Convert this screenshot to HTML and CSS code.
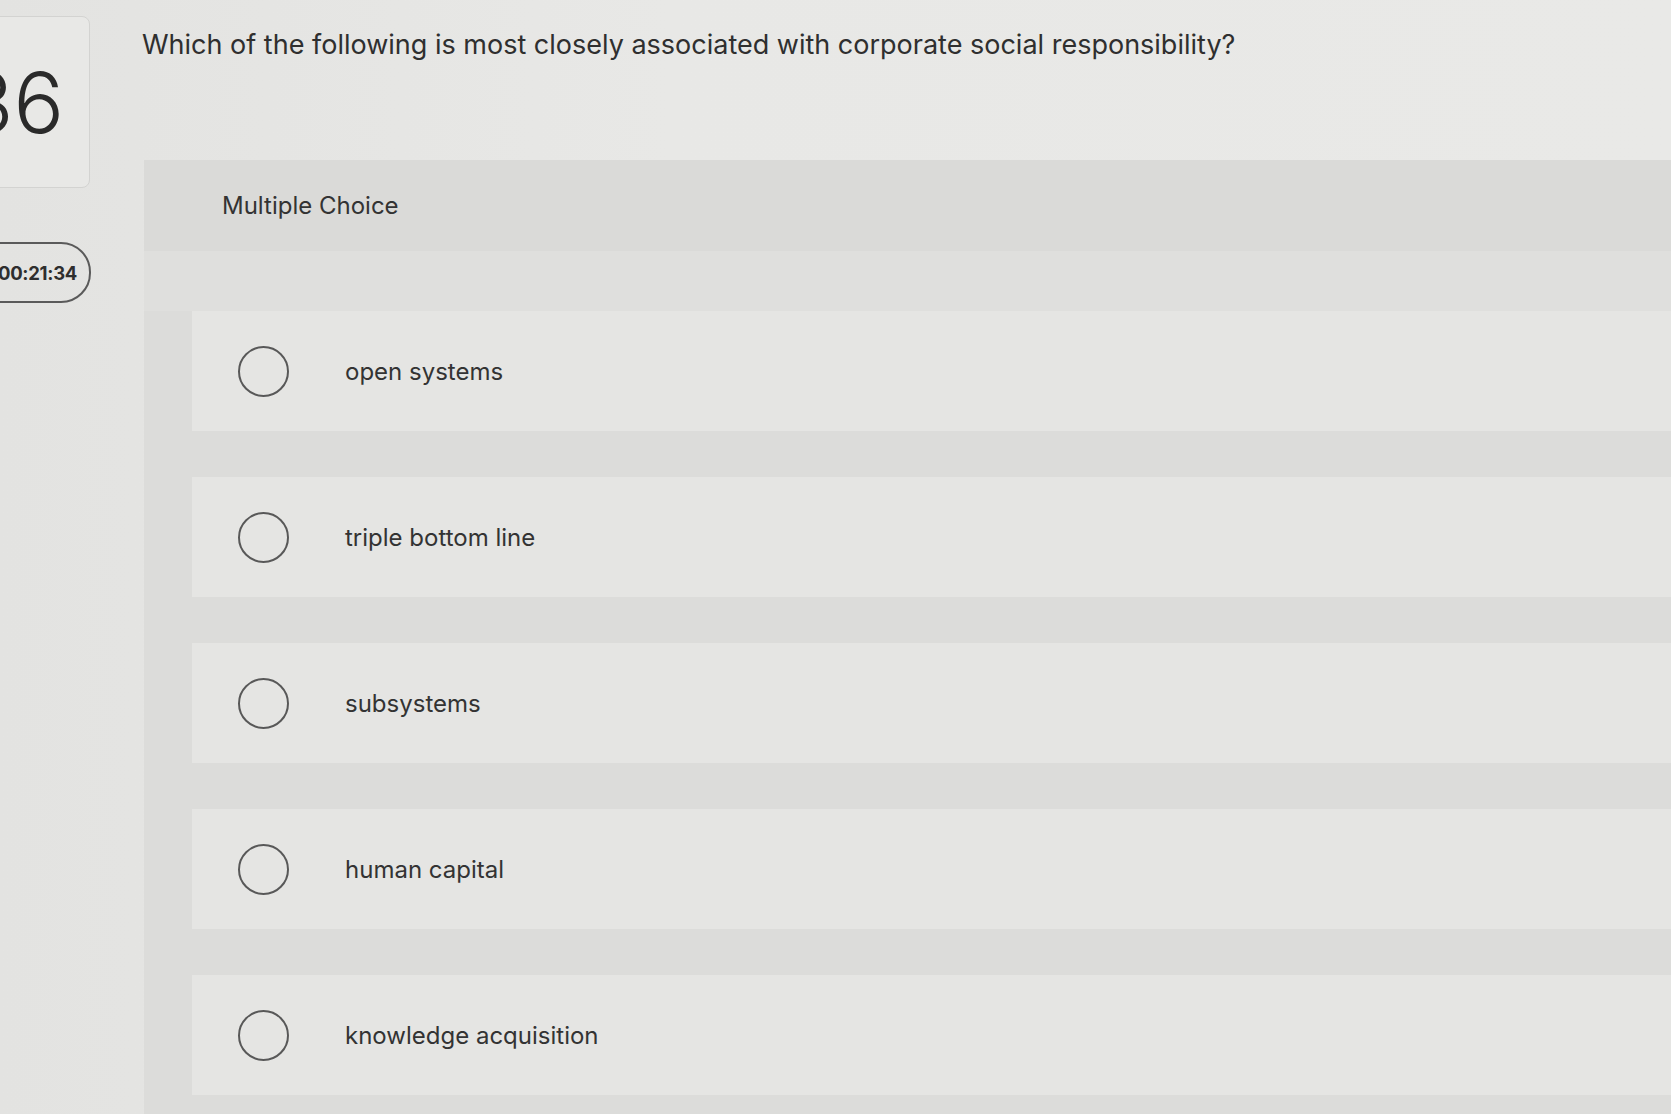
FILE: index.html
```html
<!DOCTYPE html>
<html>
<head>
<meta charset="utf-8">
<link rel="stylesheet" href="styles.css">
</head>
<body>
<div class="page">
  <aside class="side">
    <div class="qnum">36</div>
    <div class="timer">00:21:34</div>
  </aside>
  <main class="main">
    <h1 class="question">Which of the following is most closely associated with corporate social responsibility?</h1>
    <section class="panel">
      <div class="panel-head">Multiple Choice</div>
      <div class="options">
        <label class="option"><span class="radio"></span><span class="opt-text">open systems</span></label>
        <label class="option"><span class="radio"></span><span class="opt-text">triple bottom line</span></label>
        <label class="option"><span class="radio"></span><span class="opt-text">subsystems</span></label>
        <label class="option"><span class="radio"></span><span class="opt-text">human capital</span></label>
        <label class="option"><span class="radio"></span><span class="opt-text">knowledge acquisition</span></label>
      </div>
    </section>
  </main>
</div>
</body>
</html>
```
FILE: styles.css
```css
html, body {
  margin: 0;
  padding: 0;
  height: 100%;
  overflow: hidden;
}
body {
  background: #e6e6e4;
  font-family: Inter, Lato, "Open Sans", sans-serif;
  color: #3a3a3a;
}
.page {
  display: flex;
  height: 1114px;
  background: linear-gradient(90deg, #e3e3e1 0%, #e8e8e6 40%, #e9e9e7 100%);
}
.side {
  width: 144px;
  flex: none;
  display: flex;
  flex-direction: column;
  padding-top: 16px;
  box-sizing: border-box;
}
.qnum {
  width: 150px;
  height: 172px;
  margin-left: -60px;
  box-sizing: border-box;
  border: 1px solid #d3d3d1;
  border-radius: 8px;
  background: #e8e8e6;
  font-size: 84px;
  line-height: 1;
  text-align: right;
  padding-right: 25px;
  padding-top: 44px;
  color: #2a2a2a;
  font-weight: 300;
}
.timer {
  margin-top: 54px;
  margin-left: -40px;
  width: 131px;
  height: 61px;
  box-sizing: border-box;
  border: 2px solid #5a5a5a;
  border-radius: 30px;
  display: flex;
  align-items: center;
  justify-content: flex-end;
  padding-right: 12px;
  font-weight: 700;
  font-size: 18.5px;
  color: #2e2e2e;
  letter-spacing: -0.3px;
}
.main {
  flex: 1;
  display: flex;
  flex-direction: column;
  min-width: 0;
}
.question {
  margin: 0 0 0 -2px;
  padding-top: 29px;
  height: 160px;
  box-sizing: border-box;
  font-size: 27px;
  line-height: 1.2;
  font-weight: 400;
  color: #2f2f2f;
  white-space: nowrap;
}
.panel {
  background: #dcdcda;
  flex: 1;
}
.panel-head {
  height: 91px;
  display: flex;
  align-items: center;
  padding-left: 78px;
  font-size: 24px;
  color: #333;
  background: #dadad8;
}
.options {
  padding-top: 60px;
  padding-left: 48px;
  background: linear-gradient(#dfdfdd 0, #dfdfdd 60px, #dcdcda 60px);
  display: flex;
  flex-direction: column;
  gap: 46px;
}
.option {
  height: 120px;
  background: #e5e5e3;
  display: flex;
  align-items: center;
  padding-left: 46px;
}
.radio {
  width: 47px;
  height: 47px;
  border: 2px solid #585858;
  border-radius: 50%;
  flex: none;
}
.opt-text {
  margin-left: 56px;
  font-size: 24px;
  color: #333;
}
```
